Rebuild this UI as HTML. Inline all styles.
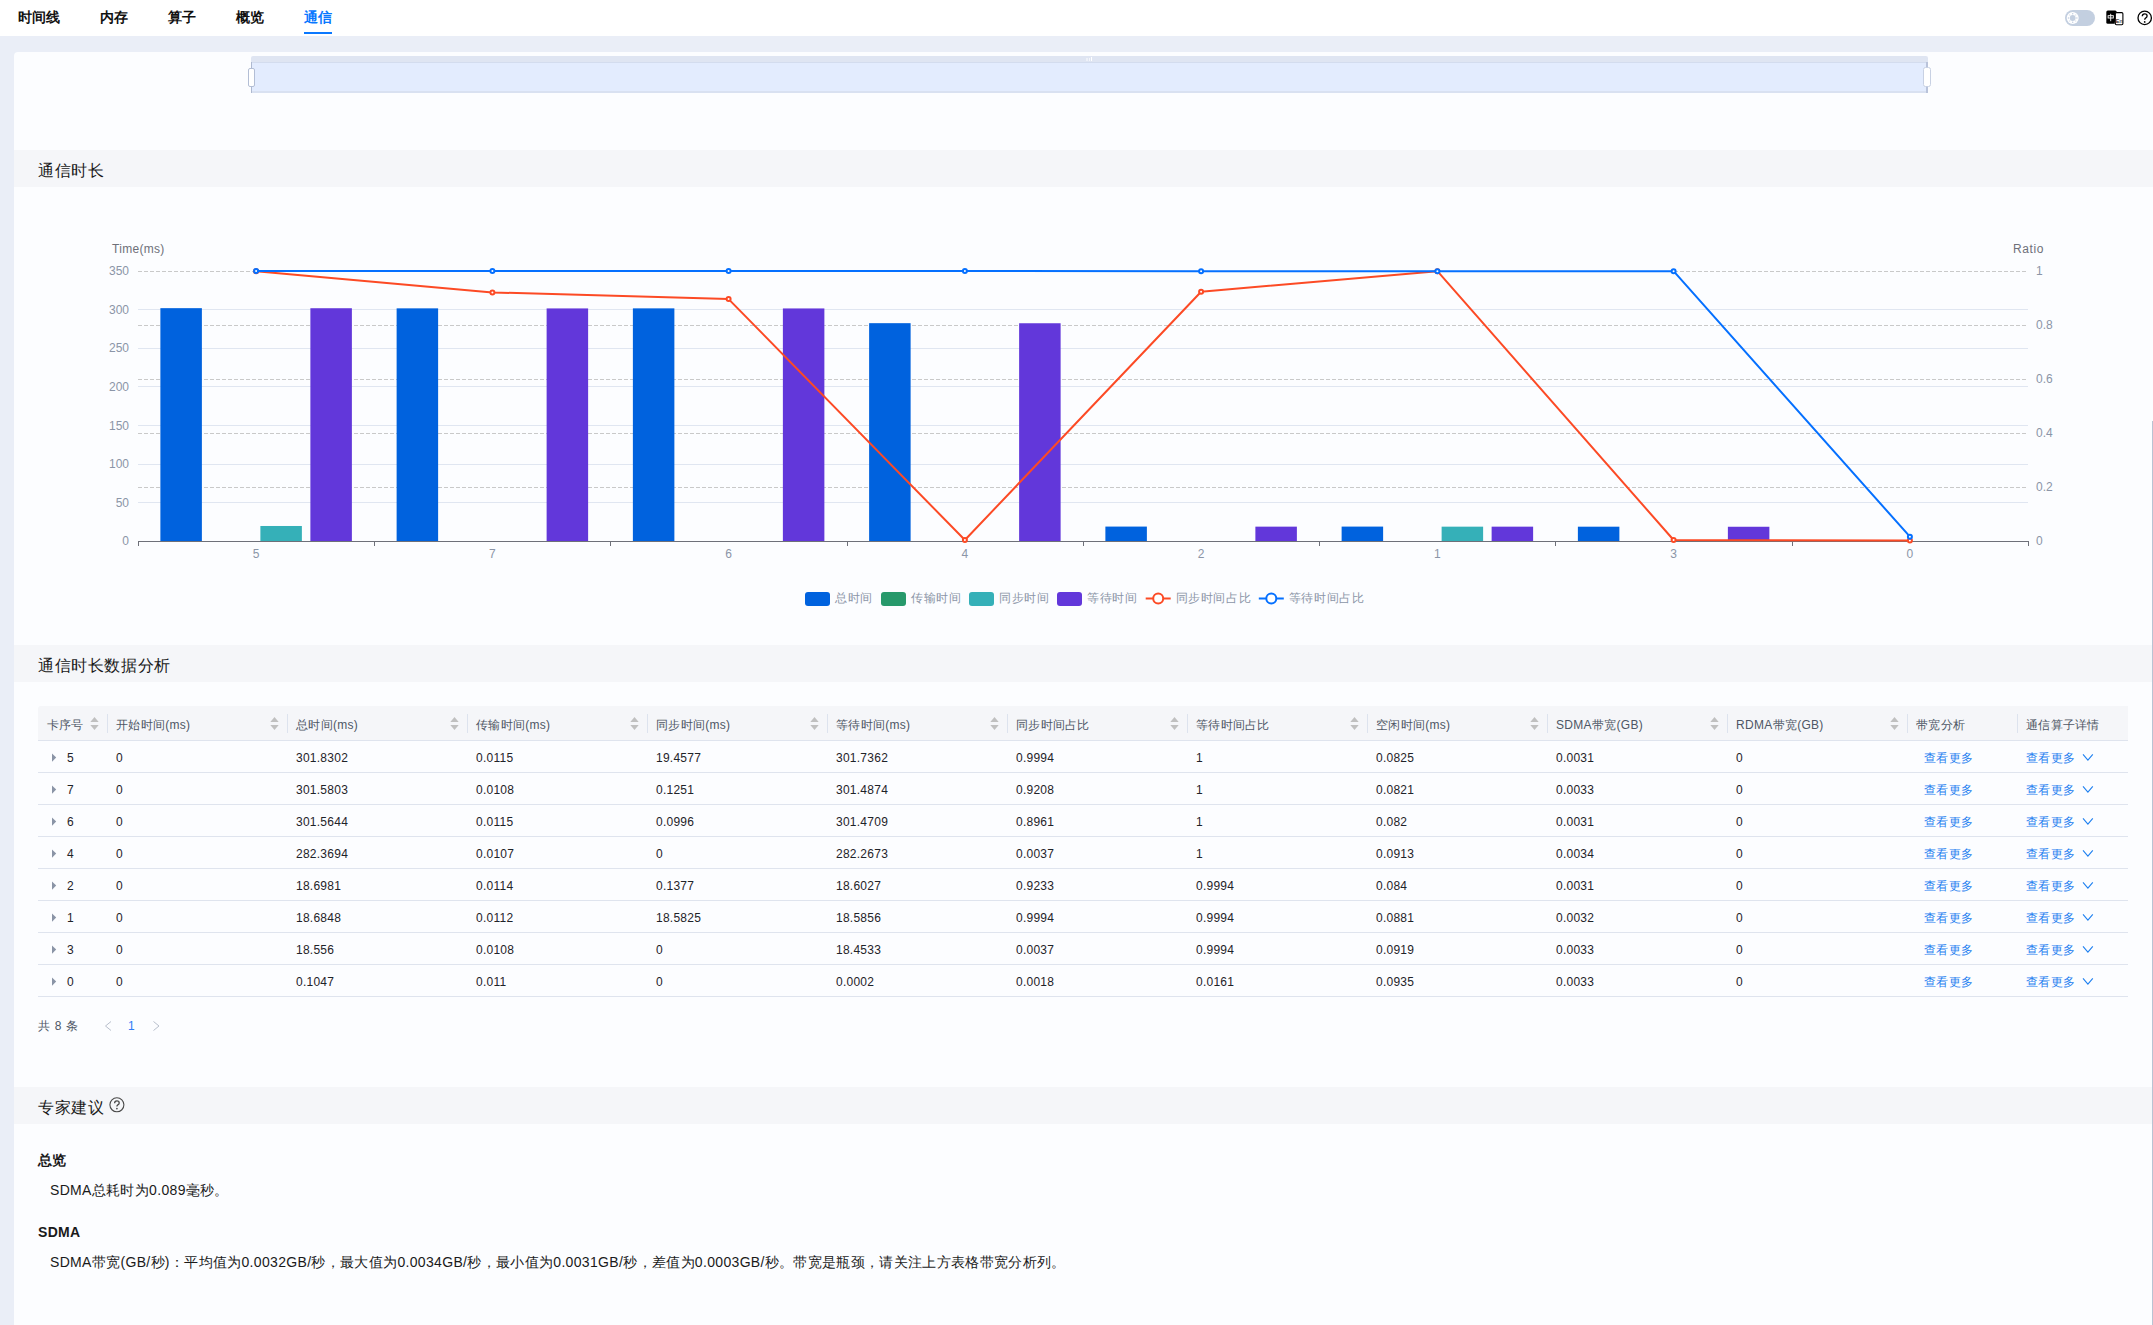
<!DOCTYPE html>
<html><head><meta charset="utf-8">
<style>
*{box-sizing:border-box;margin:0;padding:0}
html,body{width:2153px;height:1325px;overflow:hidden}
body{background:#eaeef7;font-family:"Liberation Sans",sans-serif;color:#1f2329;position:relative}
.abs{position:absolute}
#top{left:0;top:0;width:2153px;height:36px;background:#fff}
.tab{position:absolute;top:8px;font-size:14px;font-weight:bold;color:#111;line-height:18px;white-space:nowrap}
#card{left:14px;top:52px;width:2139px;height:1273px;background:#fcfdff;border-radius:4px 0 0 0}
.band{position:absolute;left:14px;width:2139px;height:37px;background:#f5f6f9}
.band span{position:absolute;left:24px;top:12px;font-size:16px;line-height:18px;color:#1a1a1a;white-space:nowrap;letter-spacing:0.6px}
.t{position:absolute;white-space:nowrap;line-height:14px}
.th{position:absolute;top:718px;font-size:12px;color:#4e5665;line-height:14px;white-space:nowrap;letter-spacing:0.3px}
.td{position:absolute;font-size:12px;color:#1f2329;line-height:14px;white-space:nowrap;letter-spacing:0.25px}
.lk{position:absolute;font-size:12px;color:#1f80f0;line-height:14px;white-space:nowrap;letter-spacing:0.3px}
.p{position:absolute;left:38px;font-size:14px;line-height:16px;white-space:nowrap;color:#1a1a1a;letter-spacing:0.33px}
</style></head><body>
<div id="top" class="abs">
  <div class="tab" style="left:18px">时间线</div>
  <div class="tab" style="left:100px">内存</div>
  <div class="tab" style="left:168px">算子</div>
  <div class="tab" style="left:236px">概览</div>
  <div class="tab" style="left:304px;color:#0a78ff">通信</div>
  <div class="abs" style="left:304px;top:32px;width:28px;height:2px;background:#0a78ff"></div>
  <svg class="abs" style="left:2060px;top:6px" width="93" height="24" viewBox="0 0 93 24">
    <rect x="5" y="4" width="30" height="16" rx="8" fill="#c3cfe0"/>
    <circle cx="12.7" cy="12" r="6" fill="#fff"/>
    <g fill="#c3cfe0">
    <circle cx="12.7" cy="7.8" r="0.75"/><circle cx="12.7" cy="16.2" r="0.75"/><circle cx="8.5" cy="12" r="0.75"/><circle cx="16.9" cy="12" r="0.75"/>
    <circle cx="9.7" cy="9" r="0.7" fill="#dde4ee"/><circle cx="15.7" cy="9" r="0.7" fill="#dde4ee"/><circle cx="9.7" cy="15" r="0.7" fill="#dde4ee"/><circle cx="15.7" cy="15" r="0.7" fill="#dde4ee"/>
    <circle cx="12.7" cy="12" r="2.9"/>
    </g>
    <path d="M47.8 4.5 H55.2 Q56.7 4.5 56.7 6 L54.6 17.7 H47.8 Q46.3 17.7 46.3 16.2 V6 Q46.3 4.5 47.8 4.5 Z" fill="#000"/>
    <rect x="55.3" y="6.6" width="7.6" height="12.1" rx="1.2" fill="#fff" stroke="#000" stroke-width="1.1"/>
    <path d="M54.6 17.7 L55.3 17.7 L55.3 18.7 Z" fill="#000"/>
    <rect x="48.1" y="9.7" width="5.2" height="2.3" fill="none" stroke="#fff" stroke-width="0.9"/>
    <line x1="50.7" y1="7.8" x2="50.7" y2="15.2" stroke="#fff" stroke-width="0.9"/>
    <text x="55.8" y="17.3" font-size="5.5" fill="#000" font-family="Liberation Sans">En</text>
    <circle cx="84.7" cy="11.9" r="6.7" fill="none" stroke="#000" stroke-width="1.3"/>
    <path d="M82.3 10.2 Q82.3 7.9 84.7 7.9 Q87.1 7.9 87.1 10 Q87.1 11.4 85.6 12.1 Q84.7 12.6 84.7 13.8" fill="none" stroke="#000" stroke-width="1.3"/>
    <circle cx="84.7" cy="15.9" r="0.85" fill="#000"/>
  </svg>
</div>
<div id="card" class="abs"></div>
<div class="abs" style="left:251px;top:56px;width:1677px;height:7px;background:#dfe5f2;border-radius:2px 2px 0 0"></div>
<div class="abs" style="left:251px;top:62px;width:1677px;height:1px;background:#d3dcee"></div>
<div class="abs" style="left:251px;top:63px;width:1677px;height:28px;background:#e3ecfe"></div>
<div class="abs" style="left:251px;top:91px;width:1677px;height:2px;background:#d9e1f1"></div>
<div class="abs" style="left:250.6px;top:62px;width:1.4px;height:31px;background:#aeb9d0"></div>
<div class="abs" style="left:248px;top:67.5px;width:7px;height:19.5px;background:#fff;border:1.2px solid #b3bed5;border-radius:2px"></div>
<div class="abs" style="left:1926.4px;top:62px;width:1.6px;height:31px;background:#b9c3da"></div>
<div class="abs" style="left:1923.2px;top:67.4px;width:7.8px;height:20px;background:#fff;border:1.6px solid #c8d1e3;border-radius:2.5px"></div>
<div class="abs" style="left:1086px;top:58px;width:2px;height:3px;background:#eef1f8"></div>
<div class="abs" style="left:1089px;top:58px;width:1px;height:3px;background:#f4f6fb"></div>
<div class="abs" style="left:1091px;top:57px;width:1px;height:4px;background:#fff"></div>
<div class="band" style="top:150px"><span>通信时长</span></div>
<div class="band" style="top:645px"><span>通信时长数据分析</span></div>
<div class="band" style="top:1087px"><span>专家建议</span><svg class="abs" style="left:94px;top:9px" width="17" height="17" viewBox="0 0 17 17"><circle cx="8.9" cy="8.8" r="7" fill="none" stroke="#4a4a4a" stroke-width="1.1"/><path d="M6.6 7.2 Q6.6 4.9 8.9 4.9 Q11.2 4.9 11.2 6.9 Q11.2 8.2 9.8 8.9 Q8.9 9.4 8.9 10.6" fill="none" stroke="#4a4a4a" stroke-width="1.3"/><circle cx="8.9" cy="12.6" r="0.85" fill="#4a4a4a"/></svg></div>
<svg class="abs" style="left:0;top:0" width="2153" height="640" viewBox="0 0 2153 640">
<line x1="138" y1="309.5" x2="2028" y2="309.5" stroke="#e0e6f1" stroke-width="1"/>
<line x1="138" y1="348.5" x2="2028" y2="348.5" stroke="#e0e6f1" stroke-width="1"/>
<line x1="138" y1="386.5" x2="2028" y2="386.5" stroke="#e0e6f1" stroke-width="1"/>
<line x1="138" y1="425.5" x2="2028" y2="425.5" stroke="#e0e6f1" stroke-width="1"/>
<line x1="138" y1="464.5" x2="2028" y2="464.5" stroke="#e0e6f1" stroke-width="1"/>
<line x1="138" y1="502.5" x2="2028" y2="502.5" stroke="#e0e6f1" stroke-width="1"/>
<line x1="138" y1="271.5" x2="2028" y2="271.5" stroke="#c9c9c9" stroke-width="1" stroke-dasharray="4 2"/>
<line x1="138" y1="325.5" x2="2028" y2="325.5" stroke="#c9c9c9" stroke-width="1" stroke-dasharray="4 2"/>
<line x1="138" y1="379.5" x2="2028" y2="379.5" stroke="#c9c9c9" stroke-width="1" stroke-dasharray="4 2"/>
<line x1="138" y1="433.5" x2="2028" y2="433.5" stroke="#c9c9c9" stroke-width="1" stroke-dasharray="4 2"/>
<line x1="138" y1="487.5" x2="2028" y2="487.5" stroke="#c9c9c9" stroke-width="1" stroke-dasharray="4 2"/>
<rect x="160.38" y="308.16" width="41.5" height="232.84" fill="#0062de"/>
<rect x="260.38" y="525.99" width="41.5" height="15.01" fill="#35b0b8"/>
<rect x="310.38" y="308.23" width="41.5" height="232.77" fill="#6237da"/>
<rect x="396.62" y="308.35" width="41.5" height="232.65" fill="#0062de"/>
<rect x="546.62" y="308.42" width="41.5" height="232.58" fill="#6237da"/>
<rect x="632.88" y="308.36" width="41.5" height="232.64" fill="#0062de"/>
<rect x="782.88" y="308.44" width="41.5" height="232.56" fill="#6237da"/>
<rect x="869.12" y="323.17" width="41.5" height="217.83" fill="#0062de"/>
<rect x="1019.12" y="323.25" width="41.5" height="217.75" fill="#6237da"/>
<rect x="1105.38" y="526.58" width="41.5" height="14.42" fill="#0062de"/>
<rect x="1255.38" y="526.65" width="41.5" height="14.35" fill="#6237da"/>
<rect x="1341.62" y="526.59" width="41.5" height="14.41" fill="#0062de"/>
<rect x="1441.62" y="526.66" width="41.5" height="14.34" fill="#35b0b8"/>
<rect x="1491.62" y="526.66" width="41.5" height="14.34" fill="#6237da"/>
<rect x="1577.88" y="526.69" width="41.5" height="14.31" fill="#0062de"/>
<rect x="1727.88" y="526.76" width="41.5" height="14.24" fill="#6237da"/>
<line x1="138" y1="541.5" x2="2028.5" y2="541.5" stroke="#6e7079" stroke-width="1"/>
<line x1="138.5" y1="541.0" x2="138.5" y2="546.0" stroke="#6e7079" stroke-width="1"/>
<line x1="374.5" y1="541.0" x2="374.5" y2="546.0" stroke="#6e7079" stroke-width="1"/>
<line x1="610.5" y1="541.0" x2="610.5" y2="546.0" stroke="#6e7079" stroke-width="1"/>
<line x1="847.5" y1="541.0" x2="847.5" y2="546.0" stroke="#6e7079" stroke-width="1"/>
<line x1="1083.5" y1="541.0" x2="1083.5" y2="546.0" stroke="#6e7079" stroke-width="1"/>
<line x1="1319.5" y1="541.0" x2="1319.5" y2="546.0" stroke="#6e7079" stroke-width="1"/>
<line x1="1555.5" y1="541.0" x2="1555.5" y2="546.0" stroke="#6e7079" stroke-width="1"/>
<line x1="1792.5" y1="541.0" x2="1792.5" y2="546.0" stroke="#6e7079" stroke-width="1"/>
<line x1="2028.5" y1="541.0" x2="2028.5" y2="546.0" stroke="#6e7079" stroke-width="1"/>
<text x="129" y="545.3" text-anchor="end" font-size="12" fill="#8b95a7" font-family="Liberation Sans">0</text>
<text x="129" y="506.7" text-anchor="end" font-size="12" fill="#8b95a7" font-family="Liberation Sans">50</text>
<text x="129" y="468.2" text-anchor="end" font-size="12" fill="#8b95a7" font-family="Liberation Sans">100</text>
<text x="129" y="429.6" text-anchor="end" font-size="12" fill="#8b95a7" font-family="Liberation Sans">150</text>
<text x="129" y="391.0" text-anchor="end" font-size="12" fill="#8b95a7" font-family="Liberation Sans">200</text>
<text x="129" y="352.4" text-anchor="end" font-size="12" fill="#8b95a7" font-family="Liberation Sans">250</text>
<text x="129" y="313.9" text-anchor="end" font-size="12" fill="#8b95a7" font-family="Liberation Sans">300</text>
<text x="129" y="275.3" text-anchor="end" font-size="12" fill="#8b95a7" font-family="Liberation Sans">350</text>
<text x="2036" y="545.3" font-size="12" fill="#8b95a7" font-family="Liberation Sans">0</text>
<text x="2036" y="491.3" font-size="12" fill="#8b95a7" font-family="Liberation Sans">0.2</text>
<text x="2036" y="437.3" font-size="12" fill="#8b95a7" font-family="Liberation Sans">0.4</text>
<text x="2036" y="383.3" font-size="12" fill="#8b95a7" font-family="Liberation Sans">0.6</text>
<text x="2036" y="329.3" font-size="12" fill="#8b95a7" font-family="Liberation Sans">0.8</text>
<text x="2036" y="275.3" font-size="12" fill="#8b95a7" font-family="Liberation Sans">1</text>
<text x="112" y="253" font-size="12" fill="#6e7079" font-family="Liberation Sans" letter-spacing="0.3">Time(ms)</text>
<text x="2013" y="253" font-size="12" fill="#6e7079" font-family="Liberation Sans" letter-spacing="0.6">Ratio</text>
<text x="256.1" y="558" text-anchor="middle" font-size="12" fill="#8b95a7" font-family="Liberation Sans">5</text>
<text x="492.4" y="558" text-anchor="middle" font-size="12" fill="#8b95a7" font-family="Liberation Sans">7</text>
<text x="728.6" y="558" text-anchor="middle" font-size="12" fill="#8b95a7" font-family="Liberation Sans">6</text>
<text x="964.9" y="558" text-anchor="middle" font-size="12" fill="#8b95a7" font-family="Liberation Sans">4</text>
<text x="1201.1" y="558" text-anchor="middle" font-size="12" fill="#8b95a7" font-family="Liberation Sans">2</text>
<text x="1437.4" y="558" text-anchor="middle" font-size="12" fill="#8b95a7" font-family="Liberation Sans">1</text>
<text x="1673.6" y="558" text-anchor="middle" font-size="12" fill="#8b95a7" font-family="Liberation Sans">3</text>
<text x="1909.9" y="558" text-anchor="middle" font-size="12" fill="#8b95a7" font-family="Liberation Sans">0</text>
<polyline points="256.1,271.2 492.4,292.4 728.6,299.1 964.9,540.0 1201.1,291.7 1437.4,271.2 1673.6,540.0 1909.9,540.5" fill="none" stroke="#fc4a25" stroke-width="2" stroke-linejoin="round"/>
<circle cx="256.1" cy="271.2" r="2" fill="#fff" stroke="#fc4a25" stroke-width="2"/>
<circle cx="492.4" cy="292.4" r="2" fill="#fff" stroke="#fc4a25" stroke-width="2"/>
<circle cx="728.6" cy="299.1" r="2" fill="#fff" stroke="#fc4a25" stroke-width="2"/>
<circle cx="964.9" cy="540.0" r="2" fill="#fff" stroke="#fc4a25" stroke-width="2"/>
<circle cx="1201.1" cy="291.7" r="2" fill="#fff" stroke="#fc4a25" stroke-width="2"/>
<circle cx="1437.4" cy="271.2" r="2" fill="#fff" stroke="#fc4a25" stroke-width="2"/>
<circle cx="1673.6" cy="540.0" r="2" fill="#fff" stroke="#fc4a25" stroke-width="2"/>
<circle cx="1909.9" cy="540.5" r="2" fill="#fff" stroke="#fc4a25" stroke-width="2"/>
<polyline points="256.1,271.0 492.4,271.0 728.6,271.0 964.9,271.0 1201.1,271.2 1437.4,271.2 1673.6,271.2 1909.9,536.7" fill="none" stroke="#0570ff" stroke-width="2" stroke-linejoin="round"/>
<circle cx="256.1" cy="271.0" r="2" fill="#fff" stroke="#0570ff" stroke-width="2"/>
<circle cx="492.4" cy="271.0" r="2" fill="#fff" stroke="#0570ff" stroke-width="2"/>
<circle cx="728.6" cy="271.0" r="2" fill="#fff" stroke="#0570ff" stroke-width="2"/>
<circle cx="964.9" cy="271.0" r="2" fill="#fff" stroke="#0570ff" stroke-width="2"/>
<circle cx="1201.1" cy="271.2" r="2" fill="#fff" stroke="#0570ff" stroke-width="2"/>
<circle cx="1437.4" cy="271.2" r="2" fill="#fff" stroke="#0570ff" stroke-width="2"/>
<circle cx="1673.6" cy="271.2" r="2" fill="#fff" stroke="#0570ff" stroke-width="2"/>
<circle cx="1909.9" cy="536.7" r="2" fill="#fff" stroke="#0570ff" stroke-width="2"/>
<rect x="805" y="592" width="25" height="14" rx="3" fill="#0062de"/>
<text x="835" y="602" font-size="12" fill="#8b95a7" font-family="Liberation Sans" letter-spacing="0.6">总时间</text>
<rect x="881" y="592" width="25" height="14" rx="3" fill="#27996b"/>
<text x="911" y="602" font-size="12" fill="#8b95a7" font-family="Liberation Sans" letter-spacing="0.6">传输时间</text>
<rect x="969" y="592" width="25" height="14" rx="3" fill="#35b0b8"/>
<text x="999" y="602" font-size="12" fill="#8b95a7" font-family="Liberation Sans" letter-spacing="0.6">同步时间</text>
<rect x="1057" y="592" width="25" height="14" rx="3" fill="#6237da"/>
<text x="1087" y="602" font-size="12" fill="#8b95a7" font-family="Liberation Sans" letter-spacing="0.6">等待时间</text>
<line x1="1145.7" y1="598.5" x2="1170.7" y2="598.5" stroke="#fc4a25" stroke-width="2"/>
<circle cx="1158.2" cy="598.5" r="5" fill="#fff" stroke="#fc4a25" stroke-width="2"/>
<text x="1175.7" y="602" font-size="12" fill="#8b95a7" font-family="Liberation Sans" letter-spacing="0.6">同步时间占比</text>
<line x1="1258.8" y1="598.5" x2="1283.8" y2="598.5" stroke="#0570ff" stroke-width="2"/>
<circle cx="1271.3" cy="598.5" r="5" fill="#fff" stroke="#0570ff" stroke-width="2"/>
<text x="1288.8" y="602" font-size="12" fill="#8b95a7" font-family="Liberation Sans" letter-spacing="0.6">等待时间占比</text>
</svg>
<div class="abs" style="left:38px;top:706px;width:2090px;height:34px;background:#f5f6f9;border-radius:3px 0 0 0"></div>
<div class="abs" style="left:38px;top:740px;width:2090px;height:1px;background:#dfe4ee"></div>
<div class="th" style="left:46.5px">卡序号</div>
<svg class="abs" style="left:90.0px;top:716px" width="9" height="15" viewBox="0 0 9 15"><path d="M0.3 6 L4.5 1 L8.7 6 Z M0.3 9 L4.5 14 L8.7 9 Z" fill="#c0c0c0"/></svg>
<div class="th" style="left:116.0px">开始时间(ms)</div>
<div class="abs" style="left:107px;top:714px;width:1px;height:19px;background:#dde3ee"></div>
<svg class="abs" style="left:270.0px;top:716px" width="9" height="15" viewBox="0 0 9 15"><path d="M0.3 6 L4.5 1 L8.7 6 Z M0.3 9 L4.5 14 L8.7 9 Z" fill="#c0c0c0"/></svg>
<div class="th" style="left:296.0px">总时间(ms)</div>
<div class="abs" style="left:287px;top:714px;width:1px;height:19px;background:#dde3ee"></div>
<svg class="abs" style="left:450.0px;top:716px" width="9" height="15" viewBox="0 0 9 15"><path d="M0.3 6 L4.5 1 L8.7 6 Z M0.3 9 L4.5 14 L8.7 9 Z" fill="#c0c0c0"/></svg>
<div class="th" style="left:476.0px">传输时间(ms)</div>
<div class="abs" style="left:467px;top:714px;width:1px;height:19px;background:#dde3ee"></div>
<svg class="abs" style="left:630.0px;top:716px" width="9" height="15" viewBox="0 0 9 15"><path d="M0.3 6 L4.5 1 L8.7 6 Z M0.3 9 L4.5 14 L8.7 9 Z" fill="#c0c0c0"/></svg>
<div class="th" style="left:656.0px">同步时间(ms)</div>
<div class="abs" style="left:647px;top:714px;width:1px;height:19px;background:#dde3ee"></div>
<svg class="abs" style="left:810.0px;top:716px" width="9" height="15" viewBox="0 0 9 15"><path d="M0.3 6 L4.5 1 L8.7 6 Z M0.3 9 L4.5 14 L8.7 9 Z" fill="#c0c0c0"/></svg>
<div class="th" style="left:836.0px">等待时间(ms)</div>
<div class="abs" style="left:827px;top:714px;width:1px;height:19px;background:#dde3ee"></div>
<svg class="abs" style="left:990.0px;top:716px" width="9" height="15" viewBox="0 0 9 15"><path d="M0.3 6 L4.5 1 L8.7 6 Z M0.3 9 L4.5 14 L8.7 9 Z" fill="#c0c0c0"/></svg>
<div class="th" style="left:1016.0px">同步时间占比</div>
<div class="abs" style="left:1007px;top:714px;width:1px;height:19px;background:#dde3ee"></div>
<svg class="abs" style="left:1170.0px;top:716px" width="9" height="15" viewBox="0 0 9 15"><path d="M0.3 6 L4.5 1 L8.7 6 Z M0.3 9 L4.5 14 L8.7 9 Z" fill="#c0c0c0"/></svg>
<div class="th" style="left:1196.0px">等待时间占比</div>
<div class="abs" style="left:1187px;top:714px;width:1px;height:19px;background:#dde3ee"></div>
<svg class="abs" style="left:1350.0px;top:716px" width="9" height="15" viewBox="0 0 9 15"><path d="M0.3 6 L4.5 1 L8.7 6 Z M0.3 9 L4.5 14 L8.7 9 Z" fill="#c0c0c0"/></svg>
<div class="th" style="left:1376.0px">空闲时间(ms)</div>
<div class="abs" style="left:1367px;top:714px;width:1px;height:19px;background:#dde3ee"></div>
<svg class="abs" style="left:1530.0px;top:716px" width="9" height="15" viewBox="0 0 9 15"><path d="M0.3 6 L4.5 1 L8.7 6 Z M0.3 9 L4.5 14 L8.7 9 Z" fill="#c0c0c0"/></svg>
<div class="th" style="left:1556.0px">SDMA带宽(GB)</div>
<div class="abs" style="left:1547px;top:714px;width:1px;height:19px;background:#dde3ee"></div>
<svg class="abs" style="left:1710.0px;top:716px" width="9" height="15" viewBox="0 0 9 15"><path d="M0.3 6 L4.5 1 L8.7 6 Z M0.3 9 L4.5 14 L8.7 9 Z" fill="#c0c0c0"/></svg>
<div class="th" style="left:1736.0px">RDMA带宽(GB)</div>
<div class="abs" style="left:1727px;top:714px;width:1px;height:19px;background:#dde3ee"></div>
<svg class="abs" style="left:1890.0px;top:716px" width="9" height="15" viewBox="0 0 9 15"><path d="M0.3 6 L4.5 1 L8.7 6 Z M0.3 9 L4.5 14 L8.7 9 Z" fill="#c0c0c0"/></svg>
<div class="th" style="left:1916.0px">带宽分析</div>
<div class="abs" style="left:1907px;top:714px;width:1px;height:19px;background:#dde3ee"></div>
<div class="th" style="left:2026.0px">通信算子详情</div>
<div class="abs" style="left:2017px;top:714px;width:1px;height:19px;background:#dde3ee"></div>
<div class="abs" style="left:38px;top:772px;width:2090px;height:1px;background:#dfe4ee"></div>
<svg class="abs" style="left:51px;top:753px" width="7" height="10" viewBox="0 0 7 10"><path d="M1 0.5 L5.2 4.6 L1 8.7 Z" fill="#8a94a6"/></svg>
<div class="td" style="left:67px;top:751px">5</div>
<div class="td" style="left:116.0px;top:751px">0</div>
<div class="td" style="left:296.0px;top:751px">301.8302</div>
<div class="td" style="left:476.0px;top:751px">0.0115</div>
<div class="td" style="left:656.0px;top:751px">19.4577</div>
<div class="td" style="left:836.0px;top:751px">301.7362</div>
<div class="td" style="left:1016.0px;top:751px">0.9994</div>
<div class="td" style="left:1196.0px;top:751px">1</div>
<div class="td" style="left:1376.0px;top:751px">0.0825</div>
<div class="td" style="left:1556.0px;top:751px">0.0031</div>
<div class="td" style="left:1736.0px;top:751px">0</div>
<div class="lk" style="left:1924px;top:751px">查看更多</div>
<div class="lk" style="left:2026px;top:751px">查看更多</div>
<svg class="abs" style="left:2082px;top:753px" width="12" height="9" viewBox="0 0 12 9"><path d="M1 1.4 L5.9 7.2 L10.8 1.4" fill="none" stroke="#1f80f0" stroke-width="1.1"/></svg>
<div class="abs" style="left:38px;top:804px;width:2090px;height:1px;background:#dfe4ee"></div>
<svg class="abs" style="left:51px;top:785px" width="7" height="10" viewBox="0 0 7 10"><path d="M1 0.5 L5.2 4.6 L1 8.7 Z" fill="#8a94a6"/></svg>
<div class="td" style="left:67px;top:783px">7</div>
<div class="td" style="left:116.0px;top:783px">0</div>
<div class="td" style="left:296.0px;top:783px">301.5803</div>
<div class="td" style="left:476.0px;top:783px">0.0108</div>
<div class="td" style="left:656.0px;top:783px">0.1251</div>
<div class="td" style="left:836.0px;top:783px">301.4874</div>
<div class="td" style="left:1016.0px;top:783px">0.9208</div>
<div class="td" style="left:1196.0px;top:783px">1</div>
<div class="td" style="left:1376.0px;top:783px">0.0821</div>
<div class="td" style="left:1556.0px;top:783px">0.0033</div>
<div class="td" style="left:1736.0px;top:783px">0</div>
<div class="lk" style="left:1924px;top:783px">查看更多</div>
<div class="lk" style="left:2026px;top:783px">查看更多</div>
<svg class="abs" style="left:2082px;top:785px" width="12" height="9" viewBox="0 0 12 9"><path d="M1 1.4 L5.9 7.2 L10.8 1.4" fill="none" stroke="#1f80f0" stroke-width="1.1"/></svg>
<div class="abs" style="left:38px;top:836px;width:2090px;height:1px;background:#dfe4ee"></div>
<svg class="abs" style="left:51px;top:817px" width="7" height="10" viewBox="0 0 7 10"><path d="M1 0.5 L5.2 4.6 L1 8.7 Z" fill="#8a94a6"/></svg>
<div class="td" style="left:67px;top:815px">6</div>
<div class="td" style="left:116.0px;top:815px">0</div>
<div class="td" style="left:296.0px;top:815px">301.5644</div>
<div class="td" style="left:476.0px;top:815px">0.0115</div>
<div class="td" style="left:656.0px;top:815px">0.0996</div>
<div class="td" style="left:836.0px;top:815px">301.4709</div>
<div class="td" style="left:1016.0px;top:815px">0.8961</div>
<div class="td" style="left:1196.0px;top:815px">1</div>
<div class="td" style="left:1376.0px;top:815px">0.082</div>
<div class="td" style="left:1556.0px;top:815px">0.0031</div>
<div class="td" style="left:1736.0px;top:815px">0</div>
<div class="lk" style="left:1924px;top:815px">查看更多</div>
<div class="lk" style="left:2026px;top:815px">查看更多</div>
<svg class="abs" style="left:2082px;top:817px" width="12" height="9" viewBox="0 0 12 9"><path d="M1 1.4 L5.9 7.2 L10.8 1.4" fill="none" stroke="#1f80f0" stroke-width="1.1"/></svg>
<div class="abs" style="left:38px;top:868px;width:2090px;height:1px;background:#dfe4ee"></div>
<svg class="abs" style="left:51px;top:849px" width="7" height="10" viewBox="0 0 7 10"><path d="M1 0.5 L5.2 4.6 L1 8.7 Z" fill="#8a94a6"/></svg>
<div class="td" style="left:67px;top:847px">4</div>
<div class="td" style="left:116.0px;top:847px">0</div>
<div class="td" style="left:296.0px;top:847px">282.3694</div>
<div class="td" style="left:476.0px;top:847px">0.0107</div>
<div class="td" style="left:656.0px;top:847px">0</div>
<div class="td" style="left:836.0px;top:847px">282.2673</div>
<div class="td" style="left:1016.0px;top:847px">0.0037</div>
<div class="td" style="left:1196.0px;top:847px">1</div>
<div class="td" style="left:1376.0px;top:847px">0.0913</div>
<div class="td" style="left:1556.0px;top:847px">0.0034</div>
<div class="td" style="left:1736.0px;top:847px">0</div>
<div class="lk" style="left:1924px;top:847px">查看更多</div>
<div class="lk" style="left:2026px;top:847px">查看更多</div>
<svg class="abs" style="left:2082px;top:849px" width="12" height="9" viewBox="0 0 12 9"><path d="M1 1.4 L5.9 7.2 L10.8 1.4" fill="none" stroke="#1f80f0" stroke-width="1.1"/></svg>
<div class="abs" style="left:38px;top:900px;width:2090px;height:1px;background:#dfe4ee"></div>
<svg class="abs" style="left:51px;top:881px" width="7" height="10" viewBox="0 0 7 10"><path d="M1 0.5 L5.2 4.6 L1 8.7 Z" fill="#8a94a6"/></svg>
<div class="td" style="left:67px;top:879px">2</div>
<div class="td" style="left:116.0px;top:879px">0</div>
<div class="td" style="left:296.0px;top:879px">18.6981</div>
<div class="td" style="left:476.0px;top:879px">0.0114</div>
<div class="td" style="left:656.0px;top:879px">0.1377</div>
<div class="td" style="left:836.0px;top:879px">18.6027</div>
<div class="td" style="left:1016.0px;top:879px">0.9233</div>
<div class="td" style="left:1196.0px;top:879px">0.9994</div>
<div class="td" style="left:1376.0px;top:879px">0.084</div>
<div class="td" style="left:1556.0px;top:879px">0.0031</div>
<div class="td" style="left:1736.0px;top:879px">0</div>
<div class="lk" style="left:1924px;top:879px">查看更多</div>
<div class="lk" style="left:2026px;top:879px">查看更多</div>
<svg class="abs" style="left:2082px;top:881px" width="12" height="9" viewBox="0 0 12 9"><path d="M1 1.4 L5.9 7.2 L10.8 1.4" fill="none" stroke="#1f80f0" stroke-width="1.1"/></svg>
<div class="abs" style="left:38px;top:932px;width:2090px;height:1px;background:#dfe4ee"></div>
<svg class="abs" style="left:51px;top:913px" width="7" height="10" viewBox="0 0 7 10"><path d="M1 0.5 L5.2 4.6 L1 8.7 Z" fill="#8a94a6"/></svg>
<div class="td" style="left:67px;top:911px">1</div>
<div class="td" style="left:116.0px;top:911px">0</div>
<div class="td" style="left:296.0px;top:911px">18.6848</div>
<div class="td" style="left:476.0px;top:911px">0.0112</div>
<div class="td" style="left:656.0px;top:911px">18.5825</div>
<div class="td" style="left:836.0px;top:911px">18.5856</div>
<div class="td" style="left:1016.0px;top:911px">0.9994</div>
<div class="td" style="left:1196.0px;top:911px">0.9994</div>
<div class="td" style="left:1376.0px;top:911px">0.0881</div>
<div class="td" style="left:1556.0px;top:911px">0.0032</div>
<div class="td" style="left:1736.0px;top:911px">0</div>
<div class="lk" style="left:1924px;top:911px">查看更多</div>
<div class="lk" style="left:2026px;top:911px">查看更多</div>
<svg class="abs" style="left:2082px;top:913px" width="12" height="9" viewBox="0 0 12 9"><path d="M1 1.4 L5.9 7.2 L10.8 1.4" fill="none" stroke="#1f80f0" stroke-width="1.1"/></svg>
<div class="abs" style="left:38px;top:964px;width:2090px;height:1px;background:#dfe4ee"></div>
<svg class="abs" style="left:51px;top:945px" width="7" height="10" viewBox="0 0 7 10"><path d="M1 0.5 L5.2 4.6 L1 8.7 Z" fill="#8a94a6"/></svg>
<div class="td" style="left:67px;top:943px">3</div>
<div class="td" style="left:116.0px;top:943px">0</div>
<div class="td" style="left:296.0px;top:943px">18.556</div>
<div class="td" style="left:476.0px;top:943px">0.0108</div>
<div class="td" style="left:656.0px;top:943px">0</div>
<div class="td" style="left:836.0px;top:943px">18.4533</div>
<div class="td" style="left:1016.0px;top:943px">0.0037</div>
<div class="td" style="left:1196.0px;top:943px">0.9994</div>
<div class="td" style="left:1376.0px;top:943px">0.0919</div>
<div class="td" style="left:1556.0px;top:943px">0.0033</div>
<div class="td" style="left:1736.0px;top:943px">0</div>
<div class="lk" style="left:1924px;top:943px">查看更多</div>
<div class="lk" style="left:2026px;top:943px">查看更多</div>
<svg class="abs" style="left:2082px;top:945px" width="12" height="9" viewBox="0 0 12 9"><path d="M1 1.4 L5.9 7.2 L10.8 1.4" fill="none" stroke="#1f80f0" stroke-width="1.1"/></svg>
<div class="abs" style="left:38px;top:996px;width:2090px;height:1px;background:#dfe4ee"></div>
<svg class="abs" style="left:51px;top:977px" width="7" height="10" viewBox="0 0 7 10"><path d="M1 0.5 L5.2 4.6 L1 8.7 Z" fill="#8a94a6"/></svg>
<div class="td" style="left:67px;top:975px">0</div>
<div class="td" style="left:116.0px;top:975px">0</div>
<div class="td" style="left:296.0px;top:975px">0.1047</div>
<div class="td" style="left:476.0px;top:975px">0.011</div>
<div class="td" style="left:656.0px;top:975px">0</div>
<div class="td" style="left:836.0px;top:975px">0.0002</div>
<div class="td" style="left:1016.0px;top:975px">0.0018</div>
<div class="td" style="left:1196.0px;top:975px">0.0161</div>
<div class="td" style="left:1376.0px;top:975px">0.0935</div>
<div class="td" style="left:1556.0px;top:975px">0.0033</div>
<div class="td" style="left:1736.0px;top:975px">0</div>
<div class="lk" style="left:1924px;top:975px">查看更多</div>
<div class="lk" style="left:2026px;top:975px">查看更多</div>
<svg class="abs" style="left:2082px;top:977px" width="12" height="9" viewBox="0 0 12 9"><path d="M1 1.4 L5.9 7.2 L10.8 1.4" fill="none" stroke="#1f80f0" stroke-width="1.1"/></svg>
<div class="t" style="left:38px;top:1019px;font-size:12px;color:#4e5665;word-spacing:1.5px">共 8 条</div>
<svg class="abs" style="left:103px;top:1019px" width="60" height="14" viewBox="0 0 60 14"><path d="M8 2.5 L2.5 7 L8 11.5" fill="none" stroke="#b8bfcc" stroke-width="1"/><path d="M50.5 2.5 L56 7 L50.5 11.5" fill="none" stroke="#b8bfcc" stroke-width="1"/></svg>
<div class="t" style="left:128px;top:1019px;font-size:12px;color:#2f7cf6">1</div>
<div class="p" style="top:1152px;font-weight:bold">总览</div>
<div class="p" style="left:50px;top:1182px">SDMA总耗时为0.089毫秒。</div>
<div class="p" style="top:1224px;font-weight:bold">SDMA</div>
<div class="p" style="left:50px;top:1254px">SDMA带宽(GB/秒)：平均值为0.0032GB/秒，最大值为0.0034GB/秒，最小值为0.0031GB/秒，差值为0.0003GB/秒。带宽是瓶颈，请关注上方表格带宽分析列。</div>
<div class="abs" style="left:2152px;top:421px;width:1px;height:904px;background:#b9c3d3"></div>
</body></html>
